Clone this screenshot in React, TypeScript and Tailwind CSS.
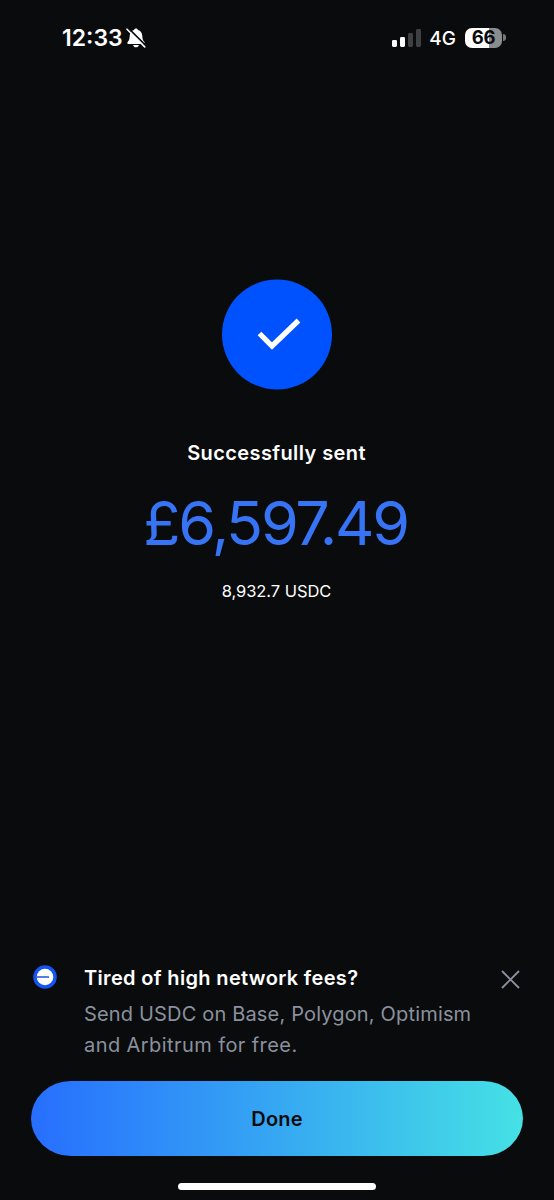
import { useState } from 'react';

const signalBars = [
    { x: 0, height: 7, fill: '#ffffff' },
    { x: 8, height: 10, fill: '#ffffff' },
    { x: 16, height: 14, fill: '#3f4043' },
    { x: 24, height: 18, fill: '#3f4043' },
];

function SilentBell() {
    return (
        <svg width="20" height="20" viewBox="0 0 20 20" className="ml-[3.5px]" aria-hidden="true">
            <path
                d="M10 .6c-1 0-1.800.6-2 1.500C5.200 2.900 3.800 5.200 3.700 8c-.1 3.200-.6 4.400-1.900 5.800-.8.9-.6 2.200.6 2.200h15.200c1.200 0 1.400-1.300.6-2.200-1.300-1.400-1.800-2.600-1.900-5.800-.1-2.800-1.500-5.100-4.300-5.900C11.800 1.200 11 .6 10 .6zM7.200 16.900c.2 1.400 1.300 2.400 2.800 2.400s2.600-1 2.800-2.400z"
                fill="#fff"
            />
            <path d="M2.300.1l18 18" stroke="#0a0b0d" strokeWidth="1.700" />
            <path d="M1 1.200l17.700 17.700" stroke="#fff" strokeWidth="1.600" strokeLinecap="round" />
        </svg>
    );
}

function StatusBar() {
    return (
        <header className="flex h-[75px] items-center pr-12 pl-[62px]">
            <span className="pt-0.5 text-[23px] leading-none font-semibold">12:33</span>
            <SilentBell />
            <svg width="29" height="18" viewBox="0 0 29 18" className="ml-auto" aria-hidden="true">
                {signalBars.map((bar) => (
                    <rect key={bar.x} x={bar.x} y={18 - bar.height} width="5" height={bar.height} rx="1.4" fill={bar.fill} />
                ))}
            </svg>
            <span className="ml-2 pt-px text-[19px] leading-none font-medium">4G</span>
            <div className="ml-[9px] flex h-5 w-[37px] items-center justify-center rounded-[7px] bg-linear-to-r from-white from-66% to-[#8b8c8e] to-66% text-[18.5px] leading-none font-bold tracking-[-0.2px] text-[#0a0b0d]">
                66
            </div>
            <div className="ml-px h-[7px] w-[3px] rounded-r-full bg-[#77787a]" />
        </header>
    );
}

function NetworkTip({ onClose }: { onClose: () => void }) {
    return (
        <section className="flex h-[119px] items-start pr-[34px] pl-[33px]">
            <svg width="24" height="24" viewBox="0 0 24 24" className="mt-[3px] shrink-0" aria-hidden="true">
                <circle cx="12" cy="12" r="11.800" fill="#1554f0" />
                <circle cx="12" cy="12" r="8.300" fill="#fff" />
                <path d="M3.500 12h12.500" stroke="#1c55df" strokeWidth="1.500" />
            </svg>
            <div className="ml-[27px] pt-px whitespace-nowrap">
                <h2 className="text-[20px] leading-[30px] font-semibold tracking-[0.34px]">Tired of high network fees?</h2>
                <p className="mt-1.5 text-[20px] leading-[31px] tracking-[0.17px] text-[#8a919e]">
                    Send USDC on Base, Polygon, Optimism
                    <br />
                    <span className="tracking-[0.42px]">and Arbitrum for free.</span>
                </p>
            </div>
            <button type="button" aria-label="Close" onClick={onClose} className="mt-2 ml-auto">
                <svg width="19" height="19" viewBox="0 0 19 19" fill="none" aria-hidden="true">
                    <path d="M1 1l17 17M18 1L1 18" stroke="#8a919e" strokeWidth="1.900" />
                </svg>
            </button>
        </section>
    );
}

export default function App() {
    const [showTip, setShowTip] = useState(true);

    return (
        <div className="flex h-[1200px] w-[554px] flex-col overflow-hidden bg-[#0a0b0d] font-['Inter',sans-serif] text-white">
            <StatusBar />

            <main className="flex flex-1 flex-col items-center pt-[204px] whitespace-nowrap">
                <svg width="110" height="111" viewBox="0 0 110 111" aria-hidden="true">
                    <circle cx="55" cy="55.500" r="55" fill="#0052ff" />
                    <path d="M37.500 54.500L50 67l26.500-25.500" fill="none" stroke="#fff" strokeWidth="5.300" />
                </svg>
                <h1 className="mt-[48px] pr-px text-[20px] leading-[30px] font-semibold tracking-[0.4px]">Successfully sent</h1>
                <p className="mt-[19px] pr-[3px] text-[61px] leading-[72px] tracking-[-2.3px] text-[#3773f5]">£6,597.49</p>
                <p className="mt-[20px] pr-px text-[16.5px] leading-[24px] tracking-[-0.05px]">8,932.7 USDC</p>
            </main>

            {showTip && <NetworkTip onClose={() => setShowTip(false)} />}

            <footer className="flex h-[119px] flex-col items-center px-[31px]">
                <button
                    type="button"
                    className="h-[75px] w-full rounded-[40px/37.5px] bg-linear-to-r/srgb from-[#276eff] to-[#45e1e5] pt-px text-[20px] font-semibold tracking-[0.2px] text-[#0a0b0d]"
                >
                    Done
                </button>
                <div className="mt-[27px] h-[7px] w-[198px] rounded-full bg-white" />
            </footer>
        </div>
    );
}
